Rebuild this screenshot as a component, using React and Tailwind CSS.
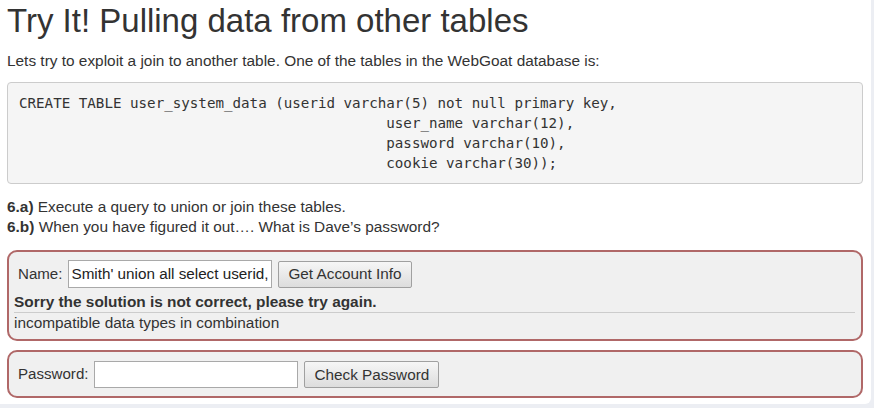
import React from "react";

const sans = { fontFamily: '"Liberation Sans", Arial, sans-serif' };

export default function App() {
  return (
    <div className="w-[874px] h-[408px] bg-[#eceef3] overflow-hidden" style={sans}>
      <div className="w-[871px] h-[404px] bg-white rounded-br-[6px] pl-[7px] pr-[8px] pt-[3px] text-[#333]">
        <h1 className="text-[33px] leading-[36px] font-normal m-0 mb-[12px] text-[#333]">
          Try It! Pulling data from other tables
        </h1>
        <p className="text-[15.4px] leading-[20px] m-0">
          Lets try to exploit a join to another table. One of the tables in the WebGoat database is:
        </p>
        <pre
          className="mt-[11px] bg-[#f5f5f5] border border-[#cccccc] rounded-[4px] px-[11px] py-[10px] text-[14.2px] leading-[20px] text-[#333] whitespace-pre"
          style={{ fontFamily: '"DejaVu Sans Mono", monospace' }}
        >
{`CREATE TABLE user_system_data (userid varchar(5) not null primary key,
                                           user_name varchar(12),
                                           password varchar(10),
                                           cookie varchar(30));`}
        </pre>
        <div className="mt-[13px] text-[15.4px] leading-[20px]">
          <div>
            <b>6.a)</b> Execute a query to union or join these tables.
          </div>
          <div>
            <b>6.b)</b> When you have figured it out…. What is Dave’s password?
          </div>
        </div>

        <div className="mt-[13px] border-2 border-[#b06868] rounded-[10px] bg-[#f0f0f0] px-[5px] pt-[8px] pb-[6px] text-[15.4px]">
          <div className="flex items-center pl-[4px] h-[28px]">
            <span className="mr-[6px] text-[15.1px]">Name:</span>
            <div className="w-[204px] h-[28px] border border-[#a9a9a9] bg-white pl-[2px] flex items-center overflow-hidden whitespace-nowrap text-[15.25px] text-[#222]">
              Smith' union all select userid,
            </div>
            <button className="ml-[6px] h-[27px] px-[9px] border border-[#a0a0a0] rounded-[2px] bg-gradient-to-b from-[#f6f6f6] to-[#dddddd] text-[15.3px] text-[#333] leading-none">
              Get Account Info
            </button>
          </div>
          <div className="mt-[4px] font-bold leading-[20px]">
            Sorry the solution is not correct, please try again.
          </div>
          <div className="border-t border-[#cccccc] leading-[20px] mr-[1px]">
            incompatible data types in combination
          </div>
        </div>

        <div className="mt-[9px] border-2 border-[#b06868] rounded-[10px] bg-[#f0f0f0] px-[5px] pt-[9px] pb-[8px] text-[15.4px]">
          <div className="flex items-center pl-[4px] h-[27px]">
            <span className="mr-[6px] text-[15.1px]">Password:</span>
            <div className="w-[204px] h-[27px] border border-[#a9a9a9] bg-white"></div>
            <button className="ml-[6px] h-[27px] px-[9px] border border-[#a0a0a0] rounded-[2px] bg-gradient-to-b from-[#f6f6f6] to-[#dddddd] text-[15.3px] text-[#333] leading-none">
              Check Password
            </button>
          </div>
        </div>
      </div>
    </div>
  );
}
